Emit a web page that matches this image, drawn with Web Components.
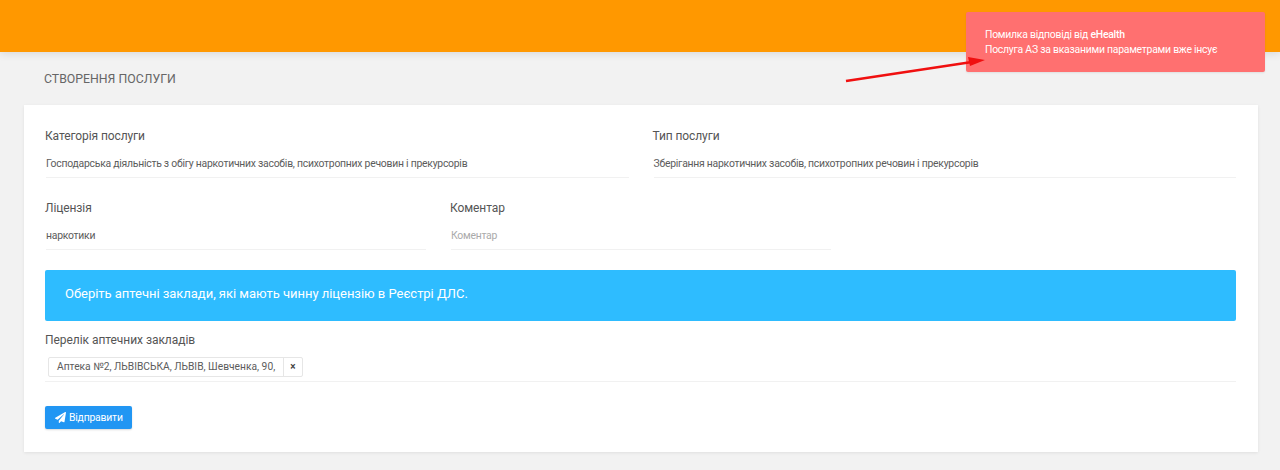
<!DOCTYPE html>
<html lang="uk">
<head>
<meta charset="utf-8">
<title>Створення послуги</title>
<style>
  html, body { margin: 0; padding: 0; background: #f2f2f2; height: 470px; overflow: hidden; }
  body { font-family: Roboto, 'Liberation Sans', sans-serif; color: #555; }
</style>
</head>
<body>
<app-page>
  <page-card>
    <form-grid>
      <form-field span="6" label="Категорія послуги">Господарська діяльність з обігу наркотичних засобів, психотропних речовин і прекурсорів</form-field>
      <form-field span="6" label="Тип послуги">Зберігання наркотичних засобів, психотропних речовин і прекурсорів</form-field>
      <form-field span="4" label="Ліцензія">наркотики</form-field>
      <form-field span="4" label="Коментар" placeholder>Коментар</form-field>
    </form-grid>
    <info-banner>Оберіть аптечні заклади, які мають чинну ліцензію в Реєстрі ДЛС.</info-banner>
    <tag-select label="Перелік аптечних закладів">Аптека №2, ЛЬВІВСЬКА, ЛЬВІВ, Шевченка, 90,</tag-select>
    <send-button>Відправити</send-button>
  </page-card>
</app-page>
<error-toast></error-toast>

<script>
customElements.define('app-page', class extends HTMLElement {
  constructor() {
    super();
    this.attachShadow({ mode: 'open' }).innerHTML = `
      <style>
        :host { display: block; }
        header { height: 52px; background: #ff9800; box-shadow: 0 2px 8px rgba(0,0,0,0.10); }
        h1 { margin: 0; padding: 20px 44px 0; height: 33px; font-size: 12.3px; line-height: 15px; font-weight: 400; color: #666; }
        main { padding: 0 22px 0 24px; }
      </style>
      <header></header>
      <h1>СТВОРЕННЯ ПОСЛУГИ</h1>
      <main><slot></slot></main>`;
  }
});

customElements.define('page-card', class extends HTMLElement {
  constructor() {
    super();
    this.attachShadow({ mode: 'open' }).innerHTML = `
      <style>
        :host { display: flex; flex-direction: column; box-sizing: border-box; height: 347px; padding: 24px 22px 0 21px; background: #fff; box-shadow: 0 1px 3px rgba(0,0,0,0.08); }
      </style>
      <slot></slot>`;
  }
});

customElements.define('form-grid', class extends HTMLElement {
  constructor() {
    super();
    this.attachShadow({ mode: 'open' }).innerHTML = `
      <style>
        :host { display: grid; grid-template-columns: repeat(12, 1fr); column-gap: 24px; row-gap: 23px; }
      </style>
      <slot></slot>`;
  }
});

customElements.define('form-field', class extends HTMLElement {
  constructor() {
    super();
    const root = this.attachShadow({ mode: 'open' });
    root.innerHTML = `
      <style>
        :host { display: block; min-width: 0; }
        :host([span="6"]) { grid-column: span 6; }
        :host([span="4"]) { grid-column: span 4; }
        :host([span="4"]:nth-of-type(4)) { grid-column: 5 / span 4; }
        label { display: block; font-size: 12px; letter-spacing: -0.09px; line-height: 15px; color: #555; margin-bottom: 2px; }
        .value { box-sizing: border-box; height: 32px; margin-left: 1px; padding-top: 11px; font-size: 10.4px; letter-spacing: -0.245px; line-height: 14px; color: #5c5c5c; border-bottom: 1px solid #f1f1f1; white-space: nowrap; }
        :host([placeholder]) .value { color: #aaa; }
      </style>
      <label></label>
      <div class="value"><slot></slot></div>`;
    root.querySelector('label').textContent = this.getAttribute('label');
  }
});

customElements.define('info-banner', class extends HTMLElement {
  constructor() {
    super();
    this.attachShadow({ mode: 'open' }).innerHTML = `
      <style>
        :host { display: block; box-sizing: border-box; height: 51px; margin-top: 20px; padding: 15px 20px 0; background: #2ebcff; border-radius: 2px; color: #fff; font-size: 13px; letter-spacing: -0.03px; line-height: 17px; }
      </style>
      <slot></slot>`;
  }
});

customElements.define('tag-select', class extends HTMLElement {
  constructor() {
    super();
    const root = this.attachShadow({ mode: 'open' });
    root.innerHTML = `
      <style>
        :host { display: block; margin-top: 12px; }
        label { display: block; font-size: 12px; letter-spacing: -0.05px; line-height: 15px; color: #555; margin-bottom: 9px; }
        .box { display: flex; align-items: flex-start; box-sizing: border-box; height: 25px; padding: 0 0 0 3px; border-bottom: 1px solid #f1f1f1; }
        .tag { display: flex; box-sizing: border-box; height: 20px; border: 1px solid #e6e6e6; border-radius: 2px; font-size: 10.25px; line-height: 18px; color: #5c5c5c; }
        .text { padding: 0 0 0 8px; border-right: 1px solid #e6e6e6; width: 226px; white-space: nowrap; }
        .x { width: 18px; text-align: center; font-size: 10px; font-weight: 700; color: #444; }
      </style>
      <label></label>
      <div class="box"><span class="tag"><span class="text"><slot></slot></span><span class="x">×</span></span></div>`;
    root.querySelector('label').textContent = this.getAttribute('label');
  }
});

customElements.define('send-button', class extends HTMLElement {
  constructor() {
    super();
    this.attachShadow({ mode: 'open' }).innerHTML = `
      <style>
        :host { display: block; align-self: flex-start; margin-top: 24px; }
        button { display: flex; align-items: center; gap: 3px; box-sizing: border-box; height: 23px; width: 87px; padding: 0 0 0 10px; border: 0; border-radius: 2px; background: #2196f3; color: #fff; font: 400 10.4px/14px Roboto, sans-serif; letter-spacing: -0.2px; box-shadow: 0 1px 2px rgba(0,0,0,0.15); }
        svg { width: 11px; height: 11px; fill: #fff; }
      </style>
      <button><svg viewBox="0 0 512 512"><path d="M476 3 13 270c-18 10-16 35 3 43l106 44 287-253c5-5 13 2 8 8L176 405v83c0 24 29 34 44 16l63-77 125 52c14 6 31-3 33-18L512 28c4-20-18-35-36-25z"/></svg><slot></slot></button>`;
  }
});

customElements.define('error-toast', class extends HTMLElement {
  constructor() {
    super();
    this.attachShadow({ mode: 'open' }).innerHTML = `
      <style>
        :host { position: absolute; left: 0; top: 0; width: 1280px; height: 100px; pointer-events: none; display: block; }
        .toast { position: absolute; left: 966px; top: 12px; width: 299px; height: 60px; box-sizing: border-box; padding: 15px 19px; background: #ff7070; border-radius: 2px; color: #fff; font-size: 10.4px; letter-spacing: -0.24px; line-height: 15px; box-shadow: 0 1px 2px rgba(0,0,0,0.08); }
        b { font-weight: 500; }
        svg { position: absolute; left: 0; top: 0; }
      </style>
      <div class="toast">Помилка відповіді від <b>eHealth</b><br>Послуга АЗ за вказаними параметрами вже інсує</div>
      <svg width="1280" height="100"><path d="M846 81 972 62" stroke="#f01010" stroke-width="2.6" fill="none"/><path d="M968 57 985 60 970 66Z" fill="#f01010"/></svg>`;
  }
});
</script>
</body>
</html>
